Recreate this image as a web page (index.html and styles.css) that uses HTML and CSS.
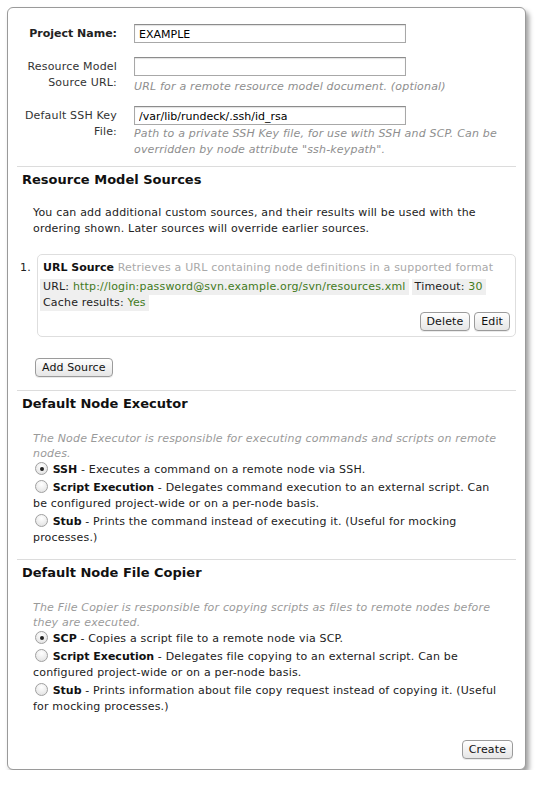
FILE: index.html
```html
<!DOCTYPE html>
<html>
<head>
<meta charset="utf-8">
<link rel="stylesheet" href="styles.css">
</head>
<body>
<div class="card">
  <div class="form">
    <div class="row row1">
      <label class="lbl bold">Project Name:</label>
      <div class="field"><input class="txt" type="text" value="EXAMPLE"></div>
    </div>
    <div class="row row2">
      <label class="lbl">Resource Model Source URL:</label>
      <div class="field"><input class="txt" type="text" value=""><div class="help">URL for a remote resource model document. (optional)</div></div>
    </div>
    <div class="row row3">
      <label class="lbl">Default SSH Key File:</label>
      <div class="field"><input class="txt" type="text" value="/var/lib/rundeck/.ssh/id_rsa"><div class="help">Path to a private SSH Key file, for use with SSH and SCP. Can be overridden by node attribute "ssh-keypath".</div></div>
    </div>
  </div>

  <hr class="sep">
  <h3 class="head">Resource Model Sources</h3>
  <p class="intro">You can add additional custom sources, and their results will be used with the ordering shown. Later sources will override earlier sources.</p>
  <div class="srcitem">
    <span class="num">1.</span>
    <div class="srcbox">
      <div class="srctitle"><b>URL Source</b> <span class="srcdesc">Retrieves a URL containing node definitions in a supported format</span></div>
      <div class="props"><span class="prop">URL: <span class="val">http://login:password@svn.example.org/svn/resources.xml</span></span><span class="prop">Timeout: <span class="val">30</span></span></div>
      <div class="props"><span class="prop">Cache results: <span class="val">Yes</span></span></div>
      <div class="srcbtns"><button class="btn">Delete</button><button class="btn">Edit</button></div>
    </div>
  </div>
  <div class="addrow"><button class="btn">Add Source</button></div>

  <hr class="sep sep1">
  <h3 class="head">Default Node Executor</h3>
  <div class="choices">
    <div class="desc">The Node Executor is responsible for executing commands and scripts on remote nodes.</div>
    <div class="opt"><span class="radio on"></span> <b>SSH</b> - Executes a command on a remote node via SSH.</div>
    <div class="opt"><span class="radio"></span> <b>Script Execution</b> - Delegates command execution to an external script. Can be configured project-wide or on a per-node basis.</div>
    <div class="opt"><span class="radio"></span> <b>Stub</b> - Prints the command instead of executing it. (Useful for mocking processes.)</div>
  </div>

  <hr class="sep sep2">
  <h3 class="head">Default Node File Copier</h3>
  <div class="choices">
    <div class="desc">The File Copier is responsible for copying scripts as files to remote nodes before they are executed.</div>
    <div class="opt"><span class="radio on"></span> <b>SCP</b> - Copies a script file to a remote node via SCP.</div>
    <div class="opt"><span class="radio"></span> <b>Script Execution</b> - Delegates file copying to an external script. Can be configured project-wide or on a per-node basis.</div>
    <div class="opt"><span class="radio"></span> <b>Stub</b> - Prints information about file copy request instead of copying it. (Useful for mocking processes.)</div>
  </div>

  <div class="footer"><button class="btn">Create</button></div>
</div>
</body>
</html>
```
FILE: styles.css
```css
html, body {
  margin: 0;
  padding: 0;
  background: #fff;
}
body {
  font-family: "DejaVu Sans", Verdana, sans-serif;
  font-size: 11px;
  line-height: 16px;
  letter-spacing: 0.18px;
  color: #222;
}
b, .bold { letter-spacing: 0; }
.card {
  margin: 7px 0 0 7px;
  width: 519px;
  height: 763px;
  border: 1px solid #9a9a9a;
  border-radius: 6px;
  box-shadow: 3px 4px 5px rgba(0,0,0,0.38);
  padding: 0 9px;
  box-sizing: border-box;
  background: #fff;
}
.form {
  padding-top: 16px;
}
.row {
  display: grid;
  grid-template-columns: 100px 272px;
  column-gap: 17px;
}
.row2 { margin-top: 14px; }
.row3 { margin-top: 11px; }
.lbl {
  text-align: right;
  color: #333;
  padding-top: 2px;
  line-height: 16px;
}
.bold { font-weight: bold; color: #222; }
.txt {
  display: block;
  box-sizing: border-box;
  width: 272px;
  height: 19px;
  margin: 0;
  border: 1px solid #a8a8a8;
  border-top-color: #8c8c8c;
  box-shadow: inset 0 1px 1px rgba(0,0,0,0.12);
  padding: 1px 4px 0;
  font-family: "DejaVu Sans", Verdana, sans-serif;
  font-size: 11px;
  color: #000;
  background: #fff;
  outline: none;
}
.help {
  width: 380px;
  margin-top: 3px;
  font-style: italic;
  color: #8e8e8e;
  line-height: 16px;
}
.row3 .help { margin-top: 1px; }
.sep {
  border: 0;
  border-top: 1px solid #dcdcdc;
  margin: 8px 0 0;
  height: 0;
}
.head {
  margin: 4px 0 0 5px;
  font-size: 13px;
  line-height: 18px;
  font-weight: bold;
  color: #111;
  letter-spacing: 0;
}
.intro {
  margin: 16px 0 0 16px;
  color: #222;
}
.srcitem {
  display: flex;
  margin-top: 17px;
}
.num {
  width: 20px;
  padding-left: 3px;
  box-sizing: border-box;
  padding-top: 6px;
}
.srcbox {
  flex: 1;
  border: 1px solid #dedede;
  border-radius: 5px;
  padding: 5px;
  height: 83px;
  box-sizing: border-box;
  display: flex;
  flex-direction: column;
}
.srctitle b { color: #111; }
.srcdesc { color: #a9a9a9; }
.props {
  display: flex;
  gap: 3px;
  line-height: 16px;
}
.srctitle + .props { margin-top: 3px; }
.prop {
  background: #efefef;
  padding: 0 3px;
  margin-left: -3px;
}
.prop + .prop { margin-left: 0; }
.val { color: #427a1c; }
.srcbtns {
  display: flex;
  justify-content: flex-end;
  gap: 4px;
  margin-top: auto;
}
.btn {
  font-family: "DejaVu Sans", Verdana, sans-serif;
  font-size: 11px;
  letter-spacing: 0.1px;
  height: 19px;
  line-height: 15px;
  padding: 0 6px;
  border: 1px solid #9b9b9b;
  border-radius: 4px;
  background: linear-gradient(#ffffff, #f2f2f2 50%, #e6e6e6);
  color: #111;
  box-shadow: 0 1px 0 rgba(0,0,0,0.08);
}
.addrow {
  margin: 21px 0 0 18px;
  padding-bottom: 5px;
}
.choices {
  margin: 18px 14px 0 16px;
}
.desc {
  font-style: italic;
  color: #9a9a9a;
  line-height: 15px;
  padding-bottom: 1px;
}
.opt {
  line-height: 16px;
}
.opt + .opt { margin-top: 2px; }
.opt b { color: #111; }
.radio {
  display: inline-block;
  box-sizing: border-box;
  width: 13px;
  height: 13px;
  border-radius: 50%;
  border: 1px solid #a0a0a0;
  background: radial-gradient(circle at 50% 30%, #ffffff, #e8e8e8 70%, #dadada);
  vertical-align: -2px;
  position: relative;
  margin-left: 2px;
  margin-right: 1px;
}
.radio.on::after {
  content: "";
  position: absolute;
  left: 3.5px;
  top: 3.5px;
  width: 4px;
  height: 4px;
  border-radius: 50%;
  background: #222;
}
.sep2 { margin-top: 13px; }
.footer {
  display: flex;
  justify-content: flex-end;
  margin-top: 25px;
  padding-right: 3px;
}
```
